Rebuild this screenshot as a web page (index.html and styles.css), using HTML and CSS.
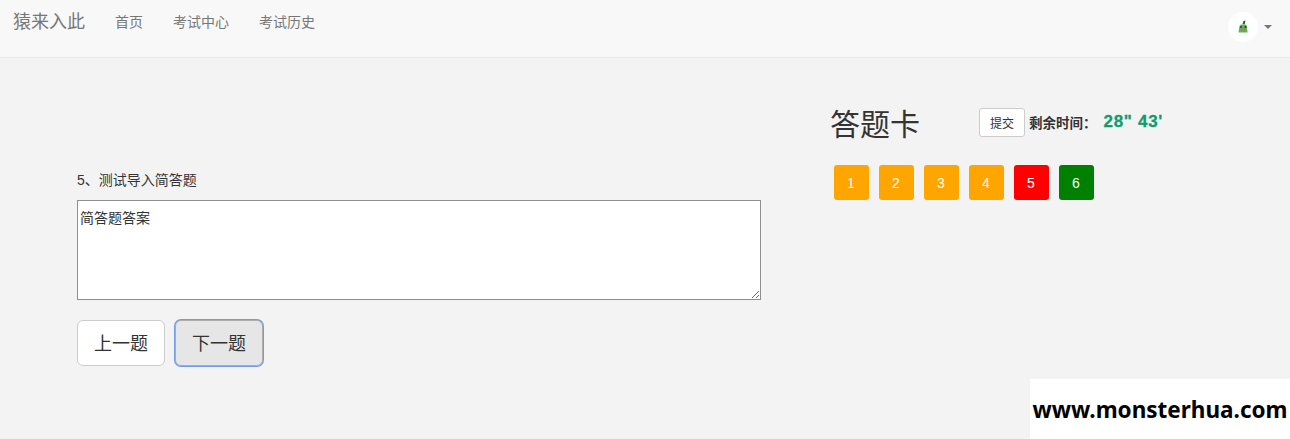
FILE: index.html
```html
<!DOCTYPE html>
<html lang="zh-CN">
<head>
  <meta charset="UTF-8" />
  <title>猿来入此</title>
  <link rel="stylesheet" href="styles.css">
</head>
<body>
  <nav class="navbar">
    <a class="brand" href="#">猿来入此</a>
    <ul class="nav-links">
      <li><a href="#">首页</a></li>
      <li><a href="#">考试中心</a></li>
      <li><a href="#">考试历史</a></li>
    </ul>
    <div class="user-menu">
      <span class="avatar">
        <svg width="14" height="14" viewBox="0 0 14 14">
          <path d="M6.5 4 L7.5 1 L9.5 0.5 L9 3 L8.5 4.5 Z" fill="#2f5d2a"/>
          <path d="M3.5 6 L5 4.5 L9.5 4.5 L11 6 L11.5 12.5 L2.5 12.5 Z" fill="#55b560"/>
          <rect x="5.5" y="8.5" width="3.5" height="2" fill="#d0703a"/>
          <circle cx="5" cy="7" r="0.9" fill="#1e3d1c"/>
          <circle cx="9.5" cy="7" r="0.9" fill="#1e3d1c"/>
        </svg>
      </span>
      <span class="caret"></span>
    </div>
  </nav>

  <main class="exam">
    <section class="question">
      <p class="question-title">5、测试导入简答题</p>
      <textarea class="answer">简答题答案</textarea>
      <div class="pager">
        <button class="btn-page" type="button">上一题</button>
        <button class="btn-page active" type="button">下一题</button>
      </div>
    </section>

    <aside class="card">
      <div class="card-head">
        <h2>答题卡</h2>
        <button class="btn-submit" type="button">提交</button>
        <span class="time-label">剩余时间：</span>
        <span class="time-left">28" 43'</span>
      </div>
      <div class="numbers">
        <a class="num orange" href="#">1</a>
        <a class="num orange" href="#">2</a>
        <a class="num orange" href="#">3</a>
        <a class="num orange" href="#">4</a>
        <a class="num red" href="#">5</a>
        <a class="num green" href="#">6</a>
      </div>
    </aside>
  </main>

  <div class="watermark">www.monsterhua.com</div>
</body>
</html>
```

FILE: styles.css
```css
* {
  box-sizing: border-box;
}
html, body {
  height: 100%;
}
body {
  margin: 0;
  background-color: #f3f3f3;
  color: #333;
  font-family: "Liberation Sans", Arial, "Noto Sans CJK SC", sans-serif;
  font-size: 14px;
  line-height: 20px;
  overflow: hidden;
}
a {
  text-decoration: none;
}
.navbar {
  display: flex;
  align-items: flex-start;
  height: 58px;
  background-color: #f8f8f8;
  border-bottom: 1px solid #e7e7e7;
}
.brand {
  margin-left: 13px;
  padding-top: 12px;
  color: #777;
  font-size: 18px;
}
.nav-links {
  display: flex;
  gap: 30px;
  margin: 0 0 0 30px;
  padding: 12px 0 0;
  list-style: none;
}
.nav-links a {
  color: #777;
}
.user-menu {
  display: flex;
  align-items: center;
  gap: 6px;
  margin-left: auto;
  margin-top: 12px;
  margin-right: 18px;
}
.avatar {
  display: flex;
  align-items: center;
  justify-content: center;
  width: 30px;
  height: 30px;
  border-radius: 50%;
  background-color: #fff;
}
.caret {
  width: 0;
  height: 0;
  border-top: 4px solid #777;
  border-left: 4px solid transparent;
  border-right: 4px solid transparent;
}
.exam {
  display: flex;
  padding-left: 77px;
}
.question {
  width: 684px;
  padding-top: 112px;
}
.question-title {
  margin: 0 0 10px;
  font-size: 14px;
}
.answer {
  display: block;
  width: 684px;
  height: 100px;
  padding: 7px 2px 2px;
  border: 1px solid #8f8f8f;
  background-color: #fff;
  color: #333;
  font: 14px/20px "Liberation Sans", Arial, "Noto Sans CJK SC", sans-serif;
}
.pager {
  display: flex;
  gap: 10px;
  margin-top: 20px;
}
.btn-page {
  width: 88px;
  height: 46px;
  padding: 0 0 2px;
  border: 1px solid #ccc;
  border-radius: 6px;
  background-color: #fff;
  color: #333;
  font: 18px "Liberation Sans", Arial, "Noto Sans CJK SC", sans-serif;
}
.btn-page.active {
  background-color: #e6e6e6;
  border-color: #adadad;
  box-shadow: 0 0 0 1px #6f9cf0;
}
.card {
  margin-left: 69px;
  padding-top: 45px;
}
.card-head {
  display: flex;
  align-items: center;
  height: 44px;
}
.card-head h2 {
  margin: 0;
  width: 149px;
  font-size: 30px;
  font-weight: 400;
  line-height: 44px;
}
.btn-submit {
  width: 46px;
  height: 29px;
  margin-top: -5px;
  padding: 0;
  border: 1px solid #ccc;
  border-radius: 3px;
  background-color: #fff;
  color: #333;
  font: 12px "Liberation Sans", Arial, "Noto Sans CJK SC", sans-serif;
}
.time-label {
  margin-left: 4px;
  margin-top: -3px;
  font-size: 13.5px;
  font-weight: 700;
}
.time-left {
  margin-top: -7px;
  margin-left: 7px;
  color: #0f9d6e;
  font-size: 17px;
  font-weight: 700;
  letter-spacing: 0.7px;
  -webkit-text-stroke: 0.3px #0f9d6e;
}
.numbers {
  display: flex;
  gap: 10px;
  margin-top: 18px;
  margin-left: 4px;
}
.num {
  display: flex;
  align-items: center;
  justify-content: center;
  width: 35px;
  height: 35px;
  padding-right: 1px;
  border-radius: 3px;
  color: #fff;
}
.orange {
  background-color: orange;
}
.red {
  background-color: red;
}
.green {
  background-color: green;
}
.watermark {
  position: absolute;
  right: 0;
  bottom: 0;
  display: flex;
  align-items: center;
  justify-content: center;
  width: 260px;
  height: 60px;
  padding-top: 2px;
  background-color: #fff;
  color: #000;
  font-family: "Noto Sans", sans-serif;
  font-size: 22.5px;
  font-weight: 700;
  white-space: nowrap;
}
```
